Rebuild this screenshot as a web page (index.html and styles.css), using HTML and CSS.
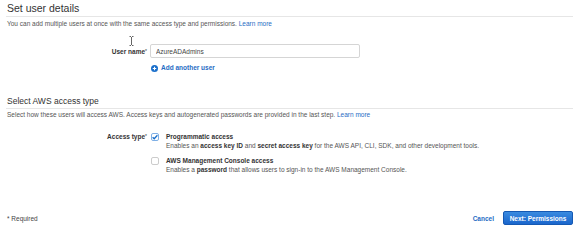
FILE: index.html
```html
<!DOCTYPE html>
<html lang="en">

<head>
    <meta charset="UTF-8">
    <meta name="viewport" content="width=device-width, initial-scale=1.0">
    <title>Add user</title>
    <link rel="stylesheet" href="styles.css">
</head>

<body>
    <div class="page">
        <section class="details">
            <h2 class="title">Set user details</h2>
            <p class="desc">You can add multiple users at once with the same access type and permissions. <a href="#" class="link">Learn more</a></p>

            <svg class="cursor" width="5" height="10" viewBox="0 0 5 10">
                <path d="M0.5 0.5h1.5M3 0.5h1.5M2.5 1v8M0.5 9.5h1.5M3 9.5h1.5" stroke="#555" stroke-width="0.9" fill="none" />
            </svg>

            <div class="row user-row">
                <label for="username" class="label">User name<span class="star">*</span></label>
                <input type="text" id="username" class="input" value="AzureADAdmins">
            </div>
            <div class="row add-row">
                <span></span>
                <a href="#" class="add">
                    <svg width="7" height="7" viewBox="0 0 14 14">
                        <circle cx="7" cy="7" r="7" fill="#1a6fcb" />
                        <path d="M7 3.5v7M3.5 7h7" stroke="#fff" stroke-width="2.2" />
                    </svg>
                    Add another user
                </a>
            </div>
        </section>

        <section class="access">
            <h2 class="title small">Select AWS access type</h2>
            <p class="desc desc2">Select how these users will access AWS. Access keys and autogenerated passwords are provided in the last step. <a href="#" class="link">Learn more</a></p>

            <div class="row access-row">
                <span class="label">Access type<span class="star">*</span></span>
                <div class="options">
                    <div class="option">
                        <span class="check checked">
                            <svg width="8" height="8" viewBox="0 0 8 8">
                                <path d="M1.6 4.2l1.6 1.6 3.2-3.6" stroke="#1a6fcb" stroke-width="1.3" fill="none" />
                            </svg>
                        </span>
                        <div>
                            <div class="opt-title">Programmatic access</div>
                            <div class="opt-desc">Enables an <b>access key ID</b> and <b>secret access key</b> for the AWS API, CLI, SDK, and other development tools.</div>
                        </div>
                    </div>
                    <div class="option">
                        <span class="check"></span>
                        <div>
                            <div class="opt-title">AWS Management Console access</div>
                            <div class="opt-desc">Enables a <b>password</b> that allows users to sign-in to the AWS Management Console.</div>
                        </div>
                    </div>
                </div>
            </div>
        </section>

        <div class="footer">
            <span class="required">* Required</span>
            <div class="actions">
                <a href="#" class="cancel">Cancel</a>
                <button class="next">Next: Permissions</button>
            </div>
        </div>
    </div>
</body>

</html>
```

FILE: styles.css
```css
body {
    margin: 0;
    font-family: "Liberation Sans", Arial, sans-serif;
    font-size: 6.5px;
    color: #555;
    background: #fff;
}

.page {
    padding: 0 9px 0 6px;
}

.details {
    position: relative;
}

.title {
    margin: 0;
    padding: 2px 0 2px 1px;
    font-size: 10.5px;
    line-height: 12px;
    font-weight: normal;
    color: #333;
    border-bottom: 1px solid #e6e6e6;
}

.title.small {
    margin-top: 24px;
    padding: 0 0 2px 1px;
    font-size: 8.5px;
    line-height: 10px;
}

.desc {
    margin: 3px 0 0 1px;
    line-height: 8px;
}

.desc2 {
    margin-top: 2px;
}

.link {
    color: #1f6cc4;
    text-decoration: none;
}

.cursor {
    position: absolute;
    left: 123px;
    top: 36px;
}

.row {
    display: grid;
    grid-template-columns: 141px 1fr;
    column-gap: 3px;
    align-items: center;
}

.label {
    text-align: right;
    font-weight: bold;
    color: #333;
}

.star {
    font-weight: normal;
    font-size: 5px;
    vertical-align: top;
}

.user-row {
    margin-top: 16px;
}

.input {
    width: 210px;
    height: 14px;
    box-sizing: border-box;
    border: 1px solid #d5d5d5;
    border-radius: 2px;
    padding: 0 5px;
    font-family: inherit;
    font-size: 6.5px;
    color: #444;
}

.add-row {
    margin-top: 6px;
    line-height: 8px;
}

.add {
    display: flex;
    align-items: center;
    gap: 3px;
    margin-left: 1px;
    color: #1f6cc4;
    font-weight: bold;
    text-decoration: none;
}

.access-row {
    margin-top: 13px;
    align-items: start;
}

.access-row .label {
    line-height: 9px;
}

.options {
    display: flex;
    flex-direction: column;
    gap: 6px;
}

.option {
    display: flex;
    gap: 7px;
    line-height: 9px;
}

.check {
    width: 8px;
    height: 8px;
    margin: 1px 0 0 1px;
    box-sizing: border-box;
    border: 1px solid #ccc;
    border-radius: 2px;
    flex-shrink: 0;
    position: relative;
}

.check.checked {
    border-color: #7fb0e6;
}

.check svg {
    position: absolute;
    left: -1px;
    top: -1px;
}

.opt-title {
    font-weight: bold;
    color: #333;
}

.opt-desc b {
    color: #333;
}

.footer {
    margin-top: 37px;
    display: flex;
    justify-content: space-between;
    align-items: center;
}

.required {
    margin-left: 1px;
    color: #444;
}

.actions {
    display: flex;
    align-items: center;
    gap: 9px;
}

.cancel {
    color: #1f6cc4;
    font-weight: bold;
    text-decoration: none;
}

.next {
    height: 14px;
    width: 70px;
    padding: 0;
    border: 1px solid #1559b3;
    border-radius: 2px;
    background: linear-gradient(#3a8be0, #1a66cc);
    color: #fff;
    font-family: inherit;
    font-size: 6.5px;
    font-weight: bold;
}
```
